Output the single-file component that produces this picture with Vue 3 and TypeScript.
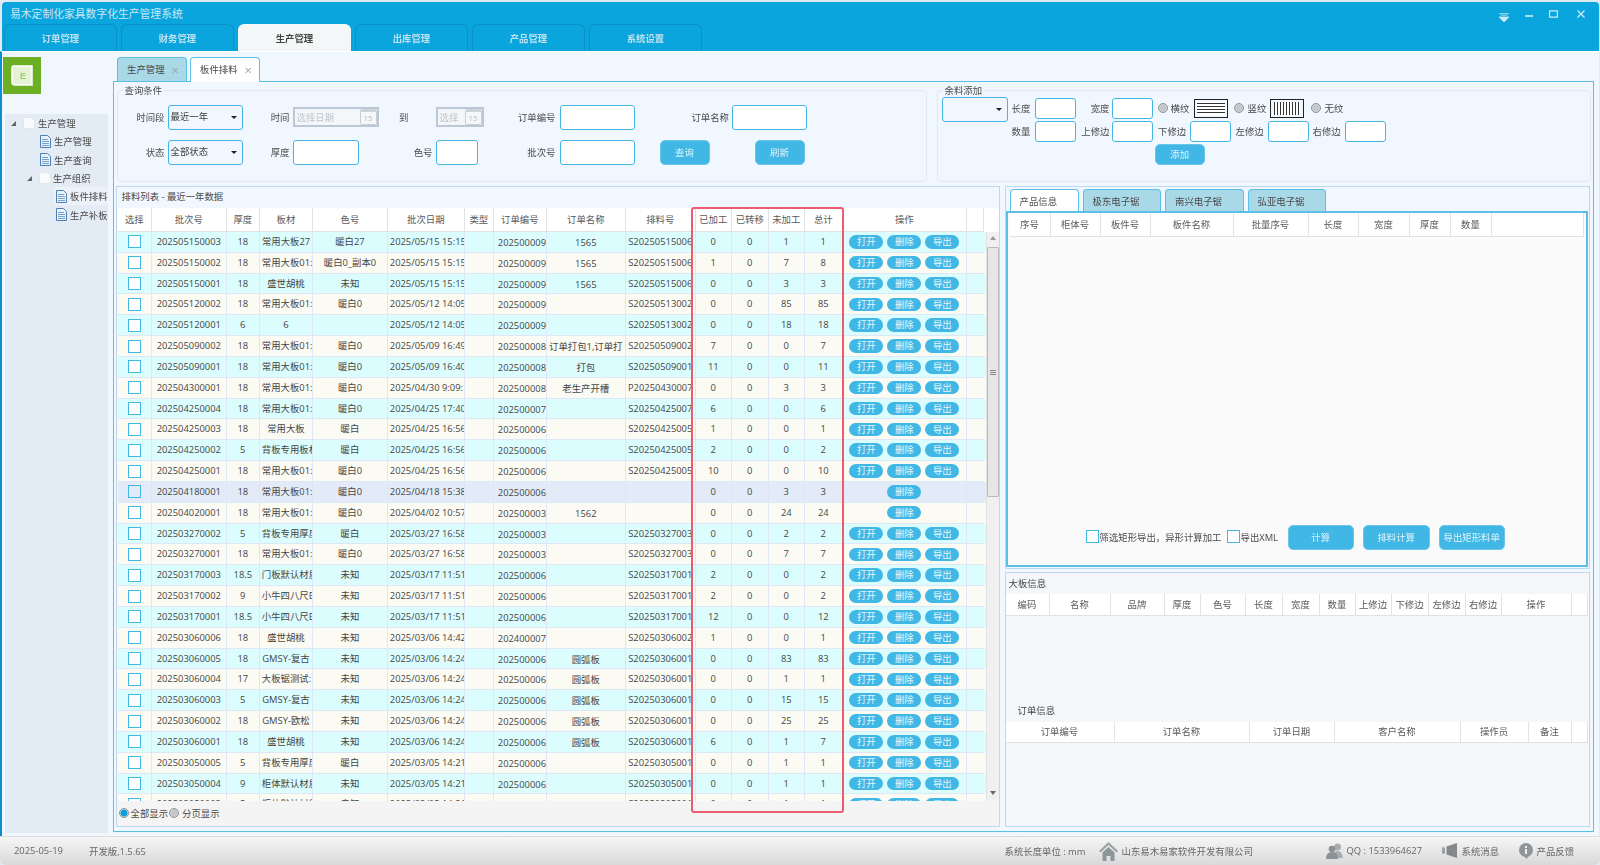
<script setup lang="ts">
const topTabs: string[] = ['订单管理', '财务管理', '生产管理', '出库管理', '产品管理', '系统设置']
const tree = [
  { label: '生产管理', level: 0, kind: 'folder', selected: false },
  { label: '生产管理', level: 1, kind: 'doc', selected: false },
  { label: '生产查询', level: 1, kind: 'doc', selected: false },
  { label: '生产组织', level: 2, kind: 'folder', selected: false },
  { label: '板件排料', level: 3, kind: 'doc', selected: true },
  { label: '生产补板', level: 3, kind: 'doc', selected: false }
]
const listHead: string[] = ['选择', '批次号', '厚度', '板材', '色号', '批次日期', '类型', '订单编号', '订单名称', '排料号', '已加工', '已转移', '未加工', '总计', '操作', '']
type Row = [string, string, string, string, string, string, string, string, number, number, number, number, number]
// batch, thick, board, color, date, order, name, nest, done, moved, todo, total, ops(3 = all, 1 = delete only)
const rows: Row[] = [
  ['202505150003', '18', '常用大板27', '暖白27', '2025/05/15 15:15:30', '2025000091', '1565', 'S20250515006', 0, 0, 1, 1, 3],
  ['202505150002', '18', '常用大板01:', '暖白0_副本0', '2025/05/15 15:15:22', '2025000091', '1565', 'S20250515006', 1, 0, 7, 8, 3],
  ['202505150001', '18', '盛世胡桃', '未知', '2025/05/15 15:15:10', '2025000091', '1565', 'S20250515006', 0, 0, 3, 3, 3],
  ['202505120002', '18', '常用大板01:', '暖白0', '2025/05/12 14:05:40', '2025000090', '', 'S20250513002', 0, 0, 85, 85, 3],
  ['202505120001', '6', '6', '', '2025/05/12 14:05:12', '2025000090', '', 'S20250513002', 0, 0, 18, 18, 3],
  ['202505090002', '18', '常用大板01:', '暖白0', '2025/05/09 16:49:20', '2025000088', '订单打包1,订单打', 'S20250509002', 7, 0, 0, 7, 3],
  ['202505090001', '18', '常用大板01:', '暖白0', '2025/05/09 16:40:02', '2025000087', '打包', 'S20250509001', 11, 0, 0, 11, 3],
  ['202504300001', '18', '常用大板01:', '暖白0', '2025/04/30 9:09:11', '2025000084', '老生产开槽', 'P20250430007', 0, 0, 3, 3, 3],
  ['202504250004', '18', '常用大板01:', '暖白0', '2025/04/25 17:40:06', '2025000070', '', 'S20250425007', 6, 0, 0, 6, 3],
  ['202504250003', '18', '常用大板', '暖白', '2025/04/25 16:56:40', '2025000066', '', 'S20250425005', 1, 0, 0, 1, 3],
  ['202504250002', '5', '背板专用板材', '暖白', '2025/04/25 16:56:30', '2025000066', '', 'S20250425005', 2, 0, 0, 2, 3],
  ['202504250001', '18', '常用大板01:', '暖白0', '2025/04/25 16:56:12', '2025000066', '', 'S20250425005', 10, 0, 0, 10, 3],
  ['202504180001', '18', '常用大板01:', '暖白0', '2025/04/18 15:38:44', '2025000060', '', '', 0, 0, 3, 3, 1],
  ['202504020001', '18', '常用大板01:', '暖白0', '2025/04/02 10:57:10', '2025000031', '1562', '', 0, 0, 24, 24, 1],
  ['202503270002', '5', '背板专用厚度', '暖白', '2025/03/27 16:58:20', '2025000031', '', 'S20250327003', 0, 0, 2, 2, 3],
  ['202503270001', '18', '常用大板01:', '暖白0', '2025/03/27 16:58:02', '2025000031', '', 'S20250327003', 0, 0, 7, 7, 3],
  ['202503170003', '18.5', '门板默认材质', '未知', '2025/03/17 11:51:30', '2025000060', '', 'S20250317001', 2, 0, 0, 2, 3],
  ['202503170002', '9', '小牛四八尺E', '未知', '2025/03/17 11:51:22', '2025000060', '', 'S20250317001', 2, 0, 0, 2, 3],
  ['202503170001', '18.5', '小牛四八尺E', '未知', '2025/03/17 11:51:10', '2025000060', '', 'S20250317001', 12, 0, 0, 12, 3],
  ['202503060006', '18', '盛世胡桃', '未知', '2025/03/06 14:42:30', '2024000070', '', 'S20250306002', 1, 0, 0, 1, 3],
  ['202503060005', '18', 'GMSY-复古', '未知', '2025/03/06 14:24:50', '2025000060', '圆弧板', 'S20250306001', 0, 0, 83, 83, 3],
  ['202503060004', '17', '大板锯测试:', '未知', '2025/03/06 14:24:40', '2025000060', '圆弧板', 'S20250306001', 0, 0, 1, 1, 3],
  ['202503060003', '5', 'GMSY-复古', '未知', '2025/03/06 14:24:30', '2025000060', '圆弧板', 'S20250306001', 0, 0, 15, 15, 3],
  ['202503060002', '18', 'GMSY-欧松', '未知', '2025/03/06 14:24:20', '2025000060', '圆弧板', 'S20250306001', 0, 0, 25, 25, 3],
  ['202503060001', '18', '盛世胡桃', '未知', '2025/03/06 14:24:10', '2025000060', '圆弧板', 'S20250306001', 6, 0, 1, 7, 3],
  ['202503050005', '5', '背板专用厚度', '暖白', '2025/03/05 14:21:30', '2025000060', '', 'S20250305001', 0, 0, 1, 1, 3],
  ['202503050004', '9', '柜体默认材质', '未知', '2025/03/05 14:21:20', '2025000060', '', 'S20250305001', 0, 0, 1, 1, 3],
  ['202503050003', '5', '柜体默认材质', '未知', '2025/03/05 14:21:10', '2025000060', '', 'S20250305001', 0, 0, 1, 1, 3]
]
const prodHead: string[] = ['序号', '柜体号', '板件号', '板件名称', '批量序号', '长度', '宽度', '厚度', '数量', '']
const boardHead: string[] = ['编码', '名称', '品牌', '厚度', '色号', '长度', '宽度', '数量', '上修边', '下修边', '左修边', '右修边', '操作', '']
const orderHead: string[] = ['订单编号', '订单名称', '订单日期', '客户名称', '操作员', '备注', '']
const sideTabs: string[] = ['产品信息', '极东电子锯', '南兴电子锯', '弘亚电子锯']
</script>

<template>
  <div class="win">
    <header class="titlebar">
      <div class="title-row">
        <span class="title">易木定制化家具数字化生产管理系统</span>
        <div class="win-ctrl">
          <svg width="10" height="9" viewBox="0 0 10 9"><path d="M0 .7h10M2 2.2h6M0 4l5 5 5-5z" fill="#cdeaf6" stroke="#cdeaf6" stroke-width=".8"/></svg>
          <svg width="8" height="8" viewBox="0 0 8 8"><path d="M0 4h8" stroke="#cdeaf6" stroke-width="1.6"/></svg>
          <svg width="9" height="8" viewBox="0 0 9 8"><path d="M.6.8h7.8v6.4H.6z" fill="none" stroke="#cdeaf6" stroke-width="1.2"/></svg>
          <svg width="8" height="8" viewBox="0 0 8 8"><path d="M.5.5l7 7M7.500.5l-7 7" stroke="#cdeaf6" stroke-width="1.3"/></svg>
        </div>
      </div>
      <nav class="top-tabs">
        <div v-for="t in topTabs" :key="t" class="top-tab" :class="{ on: t === '生产管理' }">{{ t }}</div>
      </nav>
    </header>

    <div class="body">
      <aside class="side">
        <div class="logo">
          <svg width="38" height="37" viewBox="0 0 38 37">
            <path d="M10 9h19v19H12q-3 0-3-3V11q0-2 1-2z" fill="#e6f2d6" stroke="#fff" stroke-width="1.5"/>
            <text x="17" y="22" font-size="9" font-weight="700" fill="#9ccb63" font-family="Liberation Sans, sans-serif">E</text>
          </svg>
        </div>
        <div class="tree">
          <div v-for="(n, i) in tree" :key="i" class="node" :class="['lv' + n.level, { sel: n.selected }]">
            <span v-if="n.kind === 'folder'" class="caret"></span>
            <svg v-if="n.kind === 'folder'" class="ico" width="12" height="12" viewBox="0 0 12 12"><path d="M.5.500h8l3 3v8H.5z" fill="#f8fafb" stroke="#e4e6e8"/></svg>
            <svg v-else class="ico" width="11" height="13" viewBox="0 0 11 13"><path d="M.5.500h7l3 3v9H.5z" fill="#e8f1fa" stroke="#4d7fb4"/><path d="M2 4.500h6M2 6.500h7M2 8.500h7M2 10.500h7" stroke="#5a8dc0" stroke-width=".8"/></svg>
            <span>{{ n.label }}</span>
          </div>
        </div>
      </aside>

      <main class="content">
        <div class="sub-tabs">
          <div class="sub-tab">生产管理<i>×</i></div>
          <div class="sub-tab on">板件排料<i>×</i></div>
        </div>
        <div class="main">
          <div class="top-row">
            <section class="fs query">
              <span class="legend">查询条件</span>
              <div class="q-row first">
                <label class="w47">时间段</label>
                <div class="select w75">最近一年<b></b></div>
                <label class="w47">时间</label>
                <div class="date w86"><em>选择日期</em><span class="cal">15</span></div>
                <label class="w33">到</label>
                <div class="date w48 ml24"><em>选择</em><span class="cal">15</span></div>
                <label class="w72">订单编号</label>
                <div class="input w75"></div>
                <label class="w94">订单名称</label>
                <div class="input w75"></div>
              </div>
              <div class="q-row">
                <label class="w47">状态</label>
                <div class="select w75">全部状态<b></b></div>
                <label class="w47">厚度</label>
                <div class="input w66"></div>
                <label class="w74">色号</label>
                <div class="input w42"></div>
                <label class="w78">批次号</label>
                <div class="input w75"></div>
                <button class="btn q1">查询</button>
                <button class="btn q2">刷新</button>
              </div>
            </section>

            <section class="fs extra">
              <span class="legend">余料添加</span>
              <div class="select ex-select"><b></b></div>
              <div class="ex-rows">
                <div class="ex-row">
                  <span class="lb23">长度</span><div class="input i41"></div>
                  <span class="lb36">宽度</span><div class="input i41 ext"></div>
                  <span class="radio r1"></span><span class="t23">横纹</span>
                  <span class="tex hz"></span>
                  <span class="radio r2"></span><span class="t22">竖纹</span>
                  <span class="tex vt"></span>
                  <span class="radio r3"></span><span class="t22">无纹</span>
                </div>
                <div class="ex-row">
                  <span class="lb23">数量</span><div class="input i41"></div>
                  <span class="lb36">上修边</span><div class="input i41 ext"></div>
                  <span class="lb31">下修边</span><div class="input i41"></div>
                  <span class="lb32">左修边</span><div class="input i41"></div>
                  <span class="lb32 tight">右修边</span><div class="input i41"></div>
                </div>
                <button class="btn add">添加</button>
              </div>
            </section>
          </div>

          <div class="bottom-row">
            <section class="list">
              <div class="list-title">排料列表 - 最近一年数据</div>
              <div class="grid-head list-cols">
                <div v-for="(h, i) in listHead" :key="i" class="hc">{{ h }}</div>
              </div>
              <div class="list-body">
                <div class="rows">
                  <div v-for="(r, i) in rows" :key="r[0]" class="row list-cols" :class="{ odd: i % 2 === 0, hi: i === 12 }">
                    <div class="c"><span class="chk"></span></div>
                    <div class="c">{{ r[0] }}</div>
                    <div class="c">{{ r[1] }}</div>
                    <div class="c">{{ r[2] }}</div>
                    <div class="c">{{ r[3] }}</div>
                    <div class="c">{{ r[4] }}</div>
                    <div class="c"></div>
                    <div class="c low order">{{ r[5] }}</div>
                    <div class="c low">{{ r[6] }}</div>
                    <div class="c">{{ r[7] }}</div>
                    <div class="c">{{ r[8] }}</div>
                    <div class="c">{{ r[9] }}</div>
                    <div class="c">{{ r[10] }}</div>
                    <div class="c">{{ r[11] }}</div>
                    <div class="c ops">
                      <template v-if="r[12] === 3">
                        <span class="pill">打开</span><span class="pill">删除</span><span class="pill">导出</span>
                      </template>
                      <span v-else class="pill">删除</span>
                    </div>
                    <div class="c last"></div>
                  </div>
                </div>
                <div class="vbar">
                  <span class="arrow up"></span>
                  <span class="thumb"><i></i></span>
                  <span class="arrow down"></span>
                </div>
              </div>
              <div class="list-foot">
                <span class="radio on"></span><span class="ft1">全部显示</span>
                <span class="radio"></span><span class="ft2">分页显示</span>
              </div>
              <div class="red-frame"></div>
            </section>

            <div class="right">
              <section class="prod">
                <div class="prod-tabs">
                  <div v-for="(t, i) in sideTabs" :key="t" class="prod-tab" :class="{ on: i === 0 }">{{ t }}</div>
                </div>
                <div class="prod-panel">
                  <div class="grid-head prod-cols">
                    <div v-for="(h, i) in prodHead" :key="i" class="hc">{{ h }}</div>
                  </div>
                  <div class="tools">
                    <span class="chk"></span><span class="tool-t1">筛选矩形导出，异形计算加工</span>
                    <span class="chk"></span><span class="tool-t2">导出XML</span>
                    <button class="btn big">计算</button>
                    <button class="btn big">排料计算</button>
                    <button class="btn big">导出矩形料单</button>
                  </div>
                </div>
              </section>
              <section class="info">
                <div class="info-title">大板信息</div>
                <div class="grid-head board-cols">
                  <div v-for="(h, i) in boardHead" :key="i" class="hc">{{ h }}</div>
                </div>
                <div class="info-gap"></div>
                <div class="info-title ind">订单信息</div>
                <div class="grid-head order-cols">
                  <div v-for="(h, i) in orderHead" :key="i" class="hc">{{ h }}</div>
                </div>
              </section>
            </div>
          </div>
        </div>
      </main>
    </div>

    <footer class="status">
      <span class="s1">2025-05-19</span>
      <span class="s2">开发版,1.5.65</span>
      <span class="s3">系统长度单位 : mm</span>
      <svg class="s4" width="19" height="20" viewBox="0 0 19 20"><path d="M9.500 1L0 10l1.500 1.500 8-7.500 8 7.500L19 10z" fill="#9aa3a6"/><path d="M3.500 11.500l6-5.500 6 5.500V20h-4v-5h-4v5h-4z" fill="#8c9699"/></svg>
      <span class="s5">山东易木易家软件开发有限公司</span>
      <svg class="s6" width="17" height="16" viewBox="0 0 17 16"><circle cx="11.500" cy="4" r="3.500" fill="#a8adb0"/><path d="M7 15q0-7 4.500-7T17 15z" fill="#a8adb0"/><circle cx="6" cy="6" r="3.300" fill="#8b9194"/><path d="M0 16q0-7 6-7t6 7z" fill="#8b9194"/></svg>
      <span class="s7">QQ : 1533964627</span>
      <svg class="s8" width="16" height="15" viewBox="0 0 16 15"><rect x="0" y="4" width="3" height="7" rx="1.500" fill="#9aa0a3"/><path d="M4.500 3.500L15 0v15L4.500 11.500z" fill="#83898c"/></svg>
      <span class="s9">系统消息</span>
      <svg class="s10" width="14" height="16" viewBox="0 0 14 16"><circle cx="7" cy="7" r="7" fill="#8f9598"/><path d="M5 13l2.500 3L9.500 13z" fill="#8f9598"/><path d="M6 3h2v2H6zM6 6h2v5H6z" fill="#f0f0f0"/></svg>
      <span class="s11">产品反馈</span>
    </footer>
  </div>
</template>

<style>
html, body { margin: 0; background: #dfeaf2; }
</style>

<style scoped>
.win {
  width: 1600px; height: 865px; overflow: hidden; display: flex; flex-direction: column;
  font-family: "Open Sans", "Noto Sans CJK SC", sans-serif; font-size: 9.4px; color: #4a4a4a;
  box-sizing: border-box; padding-top: 2px; filter: blur(.42px);
}
.win * { box-sizing: border-box; }
.titlebar { height: 49px; margin: 0 1px 0 2px; background: #0aa5dc; border-radius: 4px 4px 0 0; display: flex; flex-direction: column; flex: none; }
.title-row { height: 22px; display: flex; align-items: center; justify-content: space-between; padding: 0 14px 0 8px; }
.title { color: #c9e8f5; font-size: 10.8px; margin-top: -1px; }
.win-ctrl { display: flex; align-items: center; margin-top: 5px; }
.win-ctrl svg:nth-child(1) { margin-right: 16px; margin-top: 3px; }
.win-ctrl svg:nth-child(2) { margin-right: 16px; margin-top: 1px; }
.win-ctrl svg:nth-child(3) { margin-right: 19px; margin-top: -3px; }
.win-ctrl svg:nth-child(4) { margin-top: -3px; }
.top-tabs { display: flex; gap: 4px; padding-left: 2px; height: 27px; }
.top-tab {
  width: 113px; display: flex; align-items: center; justify-content: center; color: #bde3f3; font-weight: 600;
  border: 1px solid #0c8fc4; border-bottom: 0; border-radius: 6px 6px 0 0; background: #0aa5dc;
}
.top-tab.on { background: #f4f7f7; color: #444; border-color: #f4f7f7; }

.body { height: 785px; flex: none; display: flex; background: #f0f7fe; margin-right: 1px; border-left: 2px solid #0a8fce; border-top: 1px solid #fff; }
.side { width: 111px; flex: none; }
.logo { width: 38px; height: 37px; margin: 5px 0 0 1px; background: #6cae24; }
.tree { margin: 20px 0 0 3px; width: 103px; height: 719px; background: #e3ebf5; padding-top: 0; }
.node { height: 18.300px; display: flex; align-items: center; position: relative; color: #4a4a4a; }
.node .ico { margin-right: 3px; flex: none; }
.lv0 { padding-left: 18px; }
.lv1 { padding-left: 35px; }
.lv2 { padding-left: 34px; }
.lv3 { padding-left: 51px; }
.lv2 .ico { margin-right: 2px; }
.node.sel { background: linear-gradient(90deg, transparent 49px, #edf2f8 49px); }
.caret { position: absolute; width: 0; height: 0; border-style: solid; border-width: 0 0 5px 5px; border-color: transparent transparent #666 transparent; top: 7px; left: 6px; }
.lv2 .caret { left: 22px; }

.content { width: 1483px; flex: none; display: flex; flex-direction: column; }
.sub-tabs { display: flex; gap: 3px; height: 29px; padding: 5px 0 0 4px; }
.sub-tab {
  width: 70px; height: 24px; position: relative; padding-left: 9px; line-height: 24px; border: 1px solid #5cbfe8; border-bottom: 0;
  border-radius: 4px 4px 0 0; background: #a9d8e6;
}
.sub-tab i { position: absolute; right: 7px; top: 0; font-style: normal; font-size: 13px; color: #9aa6ad; }
.sub-tab.on { background: #fff; height: 25px; }
.main { width: 1481px; height: 751px; border: 1.500px solid #5cbfe8; padding: 7.500px 0 0 .5px; }
.top-row { display: grid; grid-template-columns: 810px 654px; column-gap: 10px; padding-left: 2px; height: 92px; }
.fs { border: 1px solid #e1e8ef; border-radius: 4px; position: relative; height: 92px; }
.legend { position: absolute; left: 5px; top: -6px; background: #f0f7fe; padding: 0 2px; line-height: 12px; }
.q-row { display: flex; align-items: center; height: 25px; margin-top: 10px; }
.q-row.first { margin-top: 14px; }
label { text-align: right; padding-right: 3px; flex: none; }
.w47 { width: 50px; }
.w33 { width: 33px; }
.w72 { width: 76px; padding-right: 4px; }
.w94 { width: 97.500px; }
.w74 { width: 77px; }
.w78 { width: 82px; padding-right: 4px; }
.input, .select { border: 1.500px solid #45b5e3; border-radius: 3px; background: #fff; height: 25px; flex: none; }
.select { background: #f1f7fe; position: relative; line-height: 22px; padding-left: 2px; color: #3c3c3c; }
.select b { position: absolute; right: 5px; top: 10px; width: 0; height: 0; border-style: solid; border-width: 3.500px 3px 0 3px; border-color: #222 transparent transparent transparent; }
.w75 { width: 75px; }
.w66 { width: 66px; }
.w42 { width: 42px; }
.w86 { width: 86px; }
.w48 { width: 48px; }
.ml24 { margin-left: 24px; }
.date { height: 20px; flex: none; background: #f4f7fa; border: 2px solid #bcc8d6; display: flex; align-items: center; justify-content: space-between; padding-left: 2px; }
.date em { font-style: normal; color: #bfc6cc; white-space: nowrap; }
.cal { width: 17px; height: 16px; border: 1px solid #c8d0d6; border-top: 3px solid #ccd4db; background: #f5f7f8; color: #b8bfc5; font-size: 8px; text-align: center; line-height: 12px; border-radius: 2px; }
.btn { border: 1px solid #6cc6ea; background: #41b7e5; color: #dff3fb; border-radius: 5px; font: inherit; padding: 0; flex: none; }
.q1 { width: 50px; height: 25px; margin-left: 25px; }
.q2 { width: 50px; height: 25px; margin-left: 45px; }

.extra { display: flex; padding: 6px 0 0 4px; align-items: flex-start; }
.ex-select { width: 66px; height: 25px; }
.ex-rows { margin: 1px 0 0 4px; }
.ex-row { display: flex; align-items: center; height: 21px; margin-bottom: 2px; white-space: nowrap; }
.ex-row .input { height: 21px; }
.lb23 { width: 23px; flex: none; }
.lb36 { width: 36px; flex: none; text-align: right; padding-right: 2px; }
.lb31 { width: 31.500px; margin-left: 5px; flex: none; }
.lb32 { width: 32px; margin-left: 5px; flex: none; }
.lb32.tight { margin-left: 4px; }
.i41 { width: 41px; }
.ext { width: 41.500px; }
.radio { width: 10px; height: 10px; border-radius: 50%; flex: none; border: 1px solid #8c9297; background: radial-gradient(circle at 50% 50%, #c4c8cb 0 50%, #eceef0 100%); display: inline-block; }
.radio.on { background: radial-gradient(circle at 50% 50%, #0f9fd8 0 55%, #e6eaed 70%); }
.r1 { margin-left: 4.500px; }
.r2 { margin-left: 6.500px; }
.r3 { margin-left: 7.500px; }
.t23 { width: 23px; margin-left: 3px; flex: none; }
.t22 { width: 22px; margin-left: 3.500px; flex: none; }
.tex { width: 34px; height: 19px; flex: none; border: 1.500px solid #222; background-color: #fff; }
.hz { background-image: repeating-linear-gradient(180deg, #333 0 1px, #fff 1px 3px); background-clip: content-box; padding: 2px; }
.vt { background-image: repeating-linear-gradient(90deg, #333 0 1px, #fff 1px 3px); background-clip: content-box; padding: 2px 3px; }
.add { display: block; width: 49.500px; height: 21px; margin-left: 143.500px; }

.bottom-row { display: grid; grid-template-columns: 884px 585px; column-gap: 5px; padding-left: 1px; margin-top: 4px; height: 641px; }
.list { border: 1px solid #bcd9ef; position: relative; background: #f5f5f5; display: flex; flex-direction: column; }
.list-title { height: 21.500px; line-height: 19px; padding-left: 5px; background: #f0f7fe; flex: none; }
.list-cols { display: grid; grid-template-columns: 34px 75px 33px 53.400px 74.600px 77px 29px 53px 79px 70px 36px 37px 36px 38px 124px 17px; margin-left: 1.300px; }
.grid-head { background: #fff; height: 24px; flex: none; }
.hc { border-right: 1px solid #e0e2e4; border-bottom: 1px solid #e0e2e4; text-align: center; line-height: 23px; color: #5a5a5a; white-space: nowrap; overflow: hidden; }
.list-body { position: relative; height: 568.500px; overflow: hidden; flex: none; }
.row { height: 20.830px; background: #fbfbf4; }
.row.odd { background: #dcfdfe; }
.row.hi { background: #e2ebf7; }
.c { border-right: 1px solid #dde7f7; border-bottom: 1px solid #dde7f7; padding: 0 2px; text-align: center; white-space: nowrap; overflow: hidden; line-height: 19.800px; color: #454545; height: 20.830px; }
.c.low { line-height: 21.500px; }
.c.order { padding-left: 4px; padding-right: 0; }
.c.last { border-right: 0; }
.chk { display: inline-block; width: 13px; height: 13px; border: 1.500px solid #41b7e5; background: #fff; vertical-align: middle; flex: none; margin-top: -1px; }
.row.hi .chk { background: #e2ebf7; }
.ops { display: flex; align-items: center; justify-content: center; gap: 4px; padding: 0; }
.pill { width: 34px; height: 13.500px; border-radius: 7px; background: #41b7e5; color: #e6f6fc; text-align: center; line-height: 13.500px; flex: none; }
.vbar { position: absolute; left: 869px; top: 0; width: 13px; height: 100%; background: #f0f0f0; border-left: 1px solid #e2e2e2; display: flex; flex-direction: column; align-items: center; }
.arrow { position: absolute; width: 0; height: 0; border-style: solid; left: 3px; }
.arrow.up { top: 4px; border-width: 0 3px 4px 3px; border-color: transparent transparent #999 transparent; }
.arrow.down { bottom: 6px; border-width: 4px 3px 0 3px; border-color: #666 transparent transparent transparent; }
.thumb { position: absolute; top: 15px; left: 0; width: 12px; height: 250px; background: #e6e6e6; border: 1px solid #bbb; border-radius: 1px; }
.thumb i { position: absolute; left: 2px; right: 2px; top: 122px; height: 6px; background: repeating-linear-gradient(180deg, #888 0 1px, transparent 1px 2px); }
.list-foot { flex: 1; display: flex; align-items: center; padding: 0 0 0 2px; background: #f4f4f4; }
.ft1 { margin: 0 1px 0 2px; }
.ft2 { margin-left: 3px; }
.red-frame { position: absolute; left: 574px; top: 20px; width: 153px; height: 606px; border: 2px solid #ee5a6f; border-radius: 3px; pointer-events: none; }

.right { display: flex; flex-direction: column; gap: 3px; }
.prod { height: 383px; border: 1px solid #bcd9ef; display: flex; flex-direction: column; }
.prod-tabs { display: flex; gap: 4px; height: 24px; padding: 2px 0 0 4px; flex: none; }
.prod-tab { width: 78.500px; height: 22px; line-height: 23px; padding-left: 9px; background: #a9d8e6; border: 1px solid #5cbfe8; border-bottom: 0; border-radius: 4px 4px 0 0; }
.prod-tab.on { width: 69px; background: #fff; height: 23px; }
.prod-panel { width: 582px; height: 356px; border: 2px solid #5cbfe8; background: #fafafa; padding: 0 2px; display: flex; flex-direction: column; }
.prod-cols { display: grid; grid-template-columns: 41px 50px 50px 83px 75px 50px 51px 41px 41px 92px; height: 24px; }
.prod-cols .hc { line-height: 23px; }
.tools { margin-top: auto; margin-bottom: 15px; display: flex; align-items: center; padding-left: 76px; height: 25px; }
.tool-t1 { width: 127px; margin-left: 1px; flex: none; white-space: nowrap; }
.tool-t2 { width: 47px; margin-left: 1px; flex: none; white-space: nowrap; }
.big { width: 66.500px; height: 25px; margin-right: 9px; }
.info { height: 255px; border: 1.500px solid #bcd9ef; background: #f4f6f9; }
.info-title { height: 21px; line-height: 21px; padding-left: 3px; color: #444; }
.info-title.ind { padding-left: 12px; height: 22px; line-height: 22px; }
.info-gap { height: 84px; }
.board-cols { display: grid; grid-template-columns: 44px 61px 54px 36px 45px 37px 37px 36px 36px 37px 37px 36px 70px 16px; height: 22px; }
.board-cols .hc { line-height: 21px; }
.order-cols { display: grid; grid-template-columns: 109px 135px 85px 126px 68px 43px 16px; height: 21px; }
.order-cols .hc { line-height: 20px; }

.status { height: 29px; flex: none; border-top: 1px solid #dcdcdc; background: linear-gradient(180deg, #f6f6f6, #d9d9d9); display: flex; align-items: center; color: #666; position: relative; border-radius: 0 0 6px 6px; padding-bottom: 1px; }
.status span { white-space: nowrap; flex: none; }
.status svg { flex: none; }
.s1 { margin-left: 14px; width: 75px; }
.s2 { width: 915.500px; }
.s3 { width: 94px; }
.s4 { margin-right: 4px; }
.s5 { width: 204px; }
.s6 { margin-right: 4px; }
.s7 { width: 95px; }
.s8 { margin-right: 4px; }
.s9 { width: 57px; }
.s10 { margin-right: 4px; }
</style>
